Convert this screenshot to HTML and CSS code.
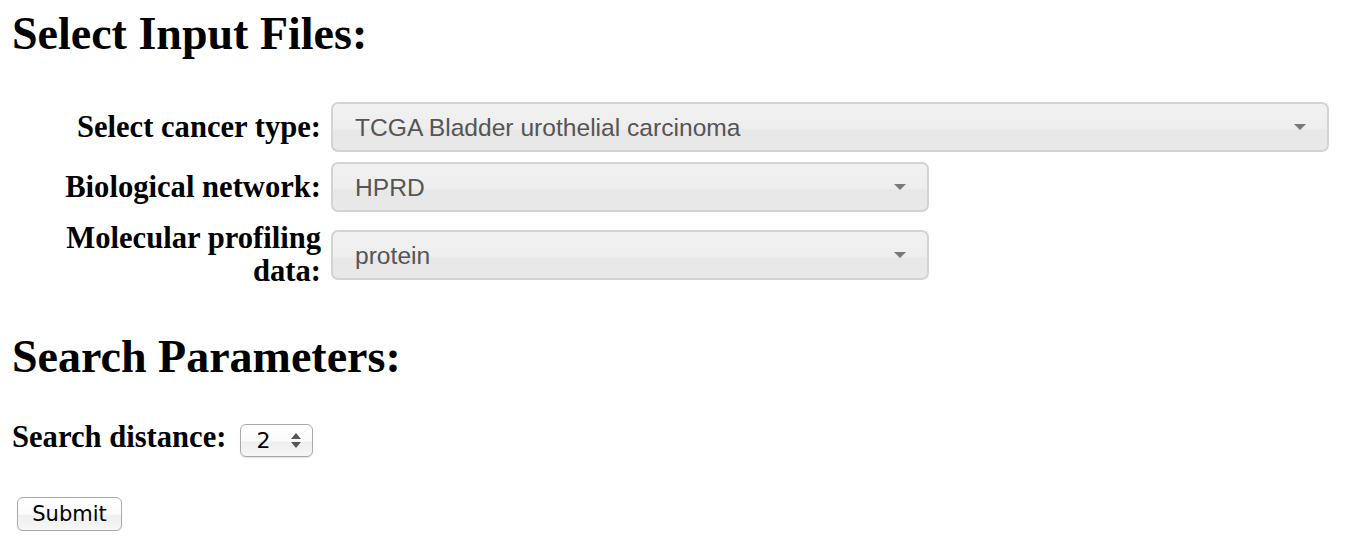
FILE: index.html
```html
<!DOCTYPE html>
<html>
<head>
<meta charset="utf-8">
<title>Input</title>
<link rel="stylesheet" href="styles.css">
</head>
<body>
<h1 class="title">Select Input Files:</h1>
<div class="form-grid">
  <label class="field-label" for="cancer">Select cancer type:</label>
  <div class="select-wrap wide">
    <select id="cancer" class="fancy-select"><option>TCGA Bladder urothelial carcinoma</option></select>
  </div>
  <label class="field-label" for="network">Biological network:</label>
  <div class="select-wrap">
    <select id="network" class="fancy-select"><option>HPRD</option></select>
  </div>
  <label class="field-label" for="profile">Molecular profiling data:</label>
  <div class="select-wrap">
    <select id="profile" class="fancy-select"><option>protein</option></select>
  </div>
</div>
<h2 class="title second">Search Parameters:</h2>
<div class="distance-row">
  <label class="field-label" for="dist">Search distance:</label>
  <div class="mini-wrap">
    <select id="dist" class="mini-select"><option>2</option></select>
    <span class="updown"><span class="up"></span><span class="down"></span></span>
  </div>
</div>
<div class="submit-row">
  <button class="submit-btn" type="button">Submit</button>
</div>
</body>
</html>
```

FILE: styles.css
```css
html, body {
  background: #ffffff;
}
body {
  margin: 8px 10px 8px 12px;
  font-family: "Liberation Serif", "Times New Roman", serif;
  color: #000;
}
.title {
  font-size: 46px;
  font-weight: bold;
  line-height: 51px;
  margin: 0 0 43px 0;
}
.title.second {
  margin-top: 43px;
  margin-bottom: 39px;
}
.form-grid {
  display: grid;
  grid-template-columns: 264px auto;
  column-gap: 10px;
  row-gap: 10px;
  margin-left: 45px;
  align-items: center;
  justify-items: start;
}
.field-label {
  font-size: 30.6px;
  font-weight: bold;
  line-height: 33px;
  text-align: right;
  justify-self: end;
}
.select-wrap {
  position: relative;
  width: 598px;
  height: 50px;
}
.select-wrap.wide {
  width: 998px;
}
.select-wrap::after {
  content: "";
  position: absolute;
  right: 23px;
  top: 22px;
  width: 0;
  height: 0;
  border-left: 6px solid transparent;
  border-right: 6px solid transparent;
  border-top: 6px solid #7a7a7a;
  pointer-events: none;
}
.fancy-select {
  -webkit-appearance: none;
  appearance: none;
  box-sizing: border-box;
  width: 100%;
  height: 50px;
  margin: 0;
  padding: 0 50px 0 22px;
  border: 2px solid #d3d3d3;
  border-radius: 7px;
  background: linear-gradient(to bottom, #f1f1f1 0%, #eeeeee 52%, #e7e7e7 58%, #e9e9e9 100%);
  font-family: "Liberation Sans", Arial, sans-serif;
  font-size: 24.6px;
  color: #555555;
  outline: none;
}
.distance-row {
  display: flex;
  align-items: center;
  gap: 14px;
}
.distance-row .field-label {
  margin-bottom: 6px;
}
.mini-wrap {
  position: relative;
  width: 73px;
  height: 33px;
}
.mini-select {
  -webkit-appearance: none;
  appearance: none;
  box-sizing: border-box;
  width: 100%;
  height: 33px;
  margin: 0;
  padding: 0 0 0 15px;
  border: 1px solid #a9a9a9;
  border-radius: 6px;
  background: linear-gradient(to bottom, #ffffff 0%, #fbfbfb 50%, #efefef 55%, #f6f6f6 100%);
  box-shadow: 0 1px 1px rgba(0,0,0,0.12);
  font-family: "DejaVu Sans", "Lucida Grande", sans-serif;
  font-size: 22px;
  color: #000;
  outline: none;
}
.updown {
  position: absolute;
  right: 12px;
  top: 9px;
  display: flex;
  flex-direction: column;
  gap: 3px;
  pointer-events: none;
}
.updown .up {
  width: 0;
  height: 0;
  border-left: 5px solid transparent;
  border-right: 5px solid transparent;
  border-bottom: 6px solid #555;
}
.updown .down {
  width: 0;
  height: 0;
  border-left: 5px solid transparent;
  border-right: 5px solid transparent;
  border-top: 6px solid #555;
}
.submit-row {
  margin-top: 37px;
  padding-left: 5px;
}
.submit-btn {
  box-sizing: border-box;
  width: 105px;
  height: 34px;
  margin: 0;
  padding: 0;
  border: 1px solid #a9a9a9;
  border-radius: 6px;
  background: linear-gradient(to bottom, #ffffff 0%, #fbfbfb 50%, #efefef 55%, #f6f6f6 100%);
  box-shadow: 0 1px 1px rgba(0,0,0,0.12);
  font-family: "DejaVu Sans", "Lucida Grande", sans-serif;
  font-size: 21px;
  color: #000;
}
```
